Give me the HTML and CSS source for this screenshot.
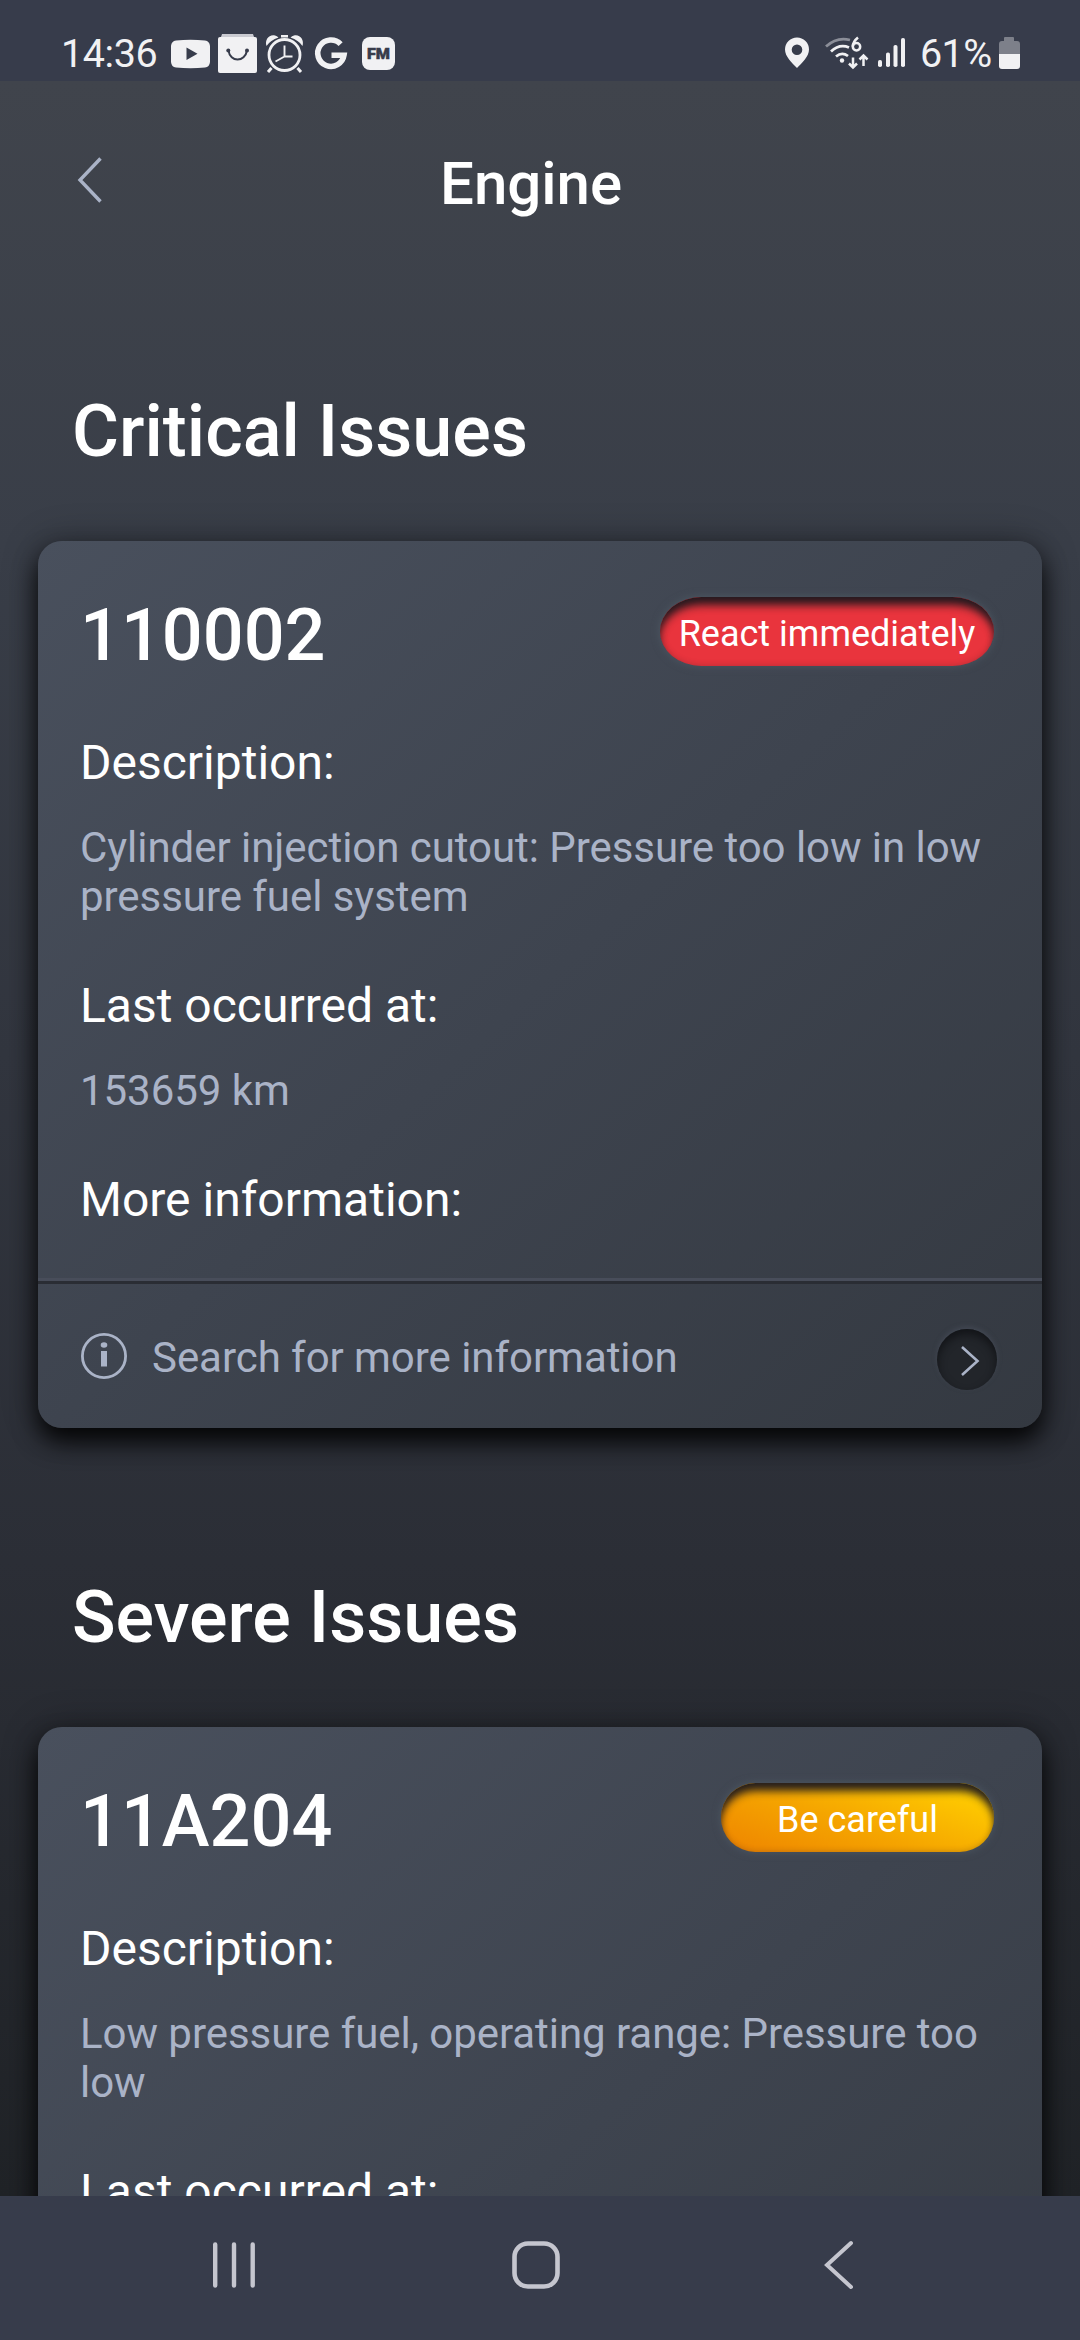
FILE: index.html
```html
<!DOCTYPE html>
<html lang="en">
<head>
<meta charset="utf-8">
<title>Engine</title>
<link rel="stylesheet" href="styles.css">
</head>
<body>
<div class="screen">
  <div class="status">
    <span class="clock">14:36</span>
    <svg class="notifications" width="226" height="42" viewBox="170 33 226 42" fill="#f1f1f3">
      <path fill-rule="evenodd" d="M176 40.500Q190.500 39 205 40.500Q209.500 41 210 46V62Q209.500 67 205 67.500Q190.500 69 176 67.500Q171.500 67 171 62V46Q171.500 41 176 40.500ZM186.500 47.500V60L197.500 53.700Z"/>
      <path d="M222 34h31l1 3h-33z" fill="#c9cad1"/>
      <rect x="218" y="37" width="39" height="36" rx="2"/>
      <path d="M228.500 50.500C230 62.500 245 62.500 247 50.500" fill="none" stroke="#373c4b" stroke-width="2"/>
      <circle cx="228.300" cy="50.500" r="2" fill="#373c4b"/><circle cx="247" cy="50.500" r="2" fill="#373c4b"/>
      <g fill="none" stroke="#f1f1f3">
        <circle cx="284.500" cy="55" r="15.500" stroke-width="2.800"/>
        <path d="M284.500 45.500V56.500L275.500 61.500M284.500 56.500H292.500" stroke-width="1.900"/>
        <path d="M271.500 68l-3.500 4M297.500 68l3.500 4" stroke-width="3"/>
      </g>
      <path d="M266.500 46C264.500 40 269 34 275 35.500Q277 36 278.500 37.500Q270.500 40 266.500 46ZM302.500 46C304.500 40 300 34 294 35.500Q292 36 290.500 37.500Q298.500 40 302.500 46ZM281 35h7v2.500h-7z"/>
      <path d="M340.600 44.200A13.200 13.200 0 1 0 344 55.200H331.500" fill="none" stroke="#f1f1f3" stroke-width="5.600"/>
      <rect x="362" y="37" width="33" height="33" rx="8"/>
      <text class="fm" x="378.500" y="58.800" text-anchor="middle" textLength="23" lengthAdjust="spacingAndGlyphs">FM</text>
    </svg>
    <svg class="signals" width="124" height="36" viewBox="784 35 124 36" fill="#f1f1f3">
      <path fill-rule="evenodd" d="M797 37.500A12 12 0 0 0 785 49.500C785 56.500 792 63 797 68C802 63 809 56.500 809 49.500A12 12 0 0 0 797 37.500ZM797 44.500a5.300 5.300 0 1 1 0 10.600a5.300 5.300 0 1 1 0-10.600Z"/>
      <g fill="none" stroke="#f1f1f3" stroke-width="2.800">
        <path d="M826 46.500Q837 36.500 850 40" stroke="#8b8e98"/>
        <path d="M831 51.500Q839.500 43.500 849 47.500M836 56.500Q842 51.500 848 56"/>
      </g>
      <circle cx="842" cy="60.500" r="2.200"/>
      <g fill="none" stroke="#f1f1f3" stroke-width="2.500">
        <path d="M858 37.500Q853 41.500 852.700 46.500"/><circle cx="856.500" cy="46.700" r="3.700"/>
        <path d="M853 57.500V68M849 63.500l4 4l4-4M863.500 66V55.500M859.500 59.500l4-4l4 4"/>
      </g>
      <rect x="878" y="60" width="4" height="7" rx="1.800"/><rect x="886" y="52.500" width="4" height="14.500" rx="1.800"/><rect x="893.500" y="45" width="4" height="22" rx="1.800"/><rect x="901" y="38" width="4" height="29" rx="1.800"/>
    </svg>
    <span class="percent">61%</span>
    <svg class="battery" width="22" height="34" viewBox="0 0 22 34">
      <path d="M7 1h8q1 0 1 1v3h3q3 0 3 3v10H1V8q0-3 3-3h2V2q0-1 1-1z" fill="#7d808a"/>
      <path d="M1 18h21v12q0 3-3 3H4q-3 0-3-3z" fill="#f1f1f3"/>
    </svg>
  </div>

  <main class="page">
    <header class="header">
      <svg class="back" width="28" height="50" viewBox="0 0 28 50"><path d="M24.500 3.500L4 25L24.500 46.500" fill="none" stroke="#aab3c7" stroke-width="3.400"/></svg>
      <h1 class="title">Engine</h1>
    </header>

    <section class="section">
      <h2 class="section-title">Critical Issues</h2>
      <article class="card">
        <div class="card-body">
          <div class="card-head"><span class="code">110002</span><span class="badge badge-red">React immediately</span></div>
          <h3 class="label">Description:</h3>
          <p class="value">Cylinder injection cutout: Pressure too low in low pressure fuel system</p>
          <h3 class="label">Last occurred at:</h3>
          <p class="value">153659 km</p>
          <h3 class="label">More information:</h3>
        </div>
        <div class="more">
          <svg class="info" width="46" height="46" viewBox="0 0 46 46"><circle cx="23" cy="23" r="21.600" fill="none" stroke="#aab3c7" stroke-width="2.800"/><ellipse cx="23" cy="12" rx="3.300" ry="2.700" fill="#aab3c7"/><path d="M20 18h6v15.500h-6z" fill="#aab3c7"/></svg>
          <span class="more-text">Search for more information</span>
          <span class="go"><svg width="22" height="32" viewBox="0 0 22 32"><path d="M2 2L17.500 16L2 30" fill="none" stroke="#aab3c7" stroke-width="2.600"/></svg></span>
        </div>
      </article>
    </section>

    <section class="section">
      <h2 class="section-title">Severe Issues</h2>
      <article class="card">
        <div class="card-body">
          <div class="card-head"><span class="code">11A204</span><span class="badge badge-yellow">Be careful</span></div>
          <h3 class="label">Description:</h3>
          <p class="value">Low pressure fuel, operating range: Pressure too low</p>
          <h3 class="label">Last occurred at:</h3>
        </div>
      </article>
    </section>
  </main>

  <nav class="nav">
    <svg class="recents" width="48" height="52" viewBox="0 0 48 52" stroke="#c5c6cf" stroke-width="4.400" stroke-linecap="round"><path d="M5.200 5.500V46.500M24 5.500V46.500M42.700 5.500V46.500"/></svg>
    <svg class="home" width="52" height="52" viewBox="0 0 52 52"><rect x="4.500" y="4.500" width="43" height="43" rx="13.500" fill="none" stroke="#c5c6cf" stroke-width="4.600"/></svg>
    <svg class="nav-back" width="36" height="52" viewBox="0 0 36 52"><path d="M30 4L6 26L30 48" fill="none" stroke="#c5c6cf" stroke-width="4" stroke-linecap="round"/></svg>
  </nav>
</div>
</body>
</html>
```
FILE: styles.css
```css
* { box-sizing: border-box; }
body { margin: 0; font-family: Roboto, "Liberation Sans", sans-serif; color: #fff; }
h1, h2, h3, p { margin: 0; font-weight: 400; }
svg { display: block; flex: none; }

.screen { width: 1080px; height: 2340px; display: flex; flex-direction: column; overflow: hidden; }

.status { flex: none; height: 81px; padding: 0 59px 0 61px; display: flex; align-items: flex-start; background: #373c4b; color: #f1f1f3; }
.clock, .percent { font-size: 39.5px; line-height: 46px; margin-top: 31px; white-space: nowrap; }
.clock { width: 109px; letter-spacing: -0.4px; }
.percent { margin-left: 12px; width: 78px; letter-spacing: -0.6px; }
.notifications { margin-top: 33px; }
.fm { font: 900 14.5px Roboto, sans-serif; fill: #373c4b; stroke: #373c4b; stroke-width: .5px; }
.signals { margin: 35px 0 0 388px; }
.battery { margin-top: 36px; }

.page { flex: 1; min-height: 0; overflow: hidden; background: linear-gradient(#40444c 0%, #393e48 22%, #2b2e36 70%, #202327 100%); }
.header { display: flex; align-items: flex-start; padding: 68px 0 0 76px; height: 138px; }
.back { margin-top: 6px; }
.title { margin-left: 336px; font-size: 60px; line-height: 70px; font-weight: 500; }

.section { padding: 0 38px; margin-top: 148px; }
.header + .section { margin-top: 171px; }
.section-title { padding-left: 34px; font-size: 72px; line-height: 84px; font-weight: 500; margin-bottom: 67px; white-space: nowrap; }

.card { height: 887px; border-radius: 24px; background: linear-gradient(138deg, #49505d 0%, #3e444f 50%, #343941 100%); box-shadow: 0 14px 24px rgba(0, 0, 0, .88), 0 0 36px rgba(0, 0, 0, .3); }
.card-body { height: 737px; padding: 52px 42px 0; }
.card-head { display: flex; justify-content: space-between; align-items: flex-start; height: 84px; }
.code { margin-top: 1px; font-size: 72px; line-height: 84px; font-weight: 500; }
.badge { margin: 4px 6px 0 0; height: 69px; padding-top: 3px; font-size: 36px; line-height: 68px; text-align: center; white-space: nowrap; box-shadow: 0 0 8px rgba(80, 92, 104, .8), inset 0 10px 9px -2px rgba(28, 24, 30, .95), inset 0 0 6px rgba(60, 30, 35, .3); }
.badge-red { width: 334px; border-radius: 42px / 35px; background: #e9343d; }
.badge-yellow { width: 273px; border-radius: 35px; background: linear-gradient(20deg, #ef8700 5%, #f5a500 45%, #ffcd00 90%); }

.label { margin-top: 57px; font-size: 48px; line-height: 56px; }
.card-head + .label { margin-top: 58px; }
.value { margin-top: 32px; margin-right: -10px; font-size: 42px; line-height: 49px; letter-spacing: -0.05px; color: #aab3c7; }

.more { height: 150px; border-top: 3px solid #484d5a; box-shadow: inset 0 3px 0 #2a2d34; padding: 3px 45px 0 43px; display: flex; align-items: center; }
.more-text { margin: 3px 0 0 25px; font-size: 42px; line-height: 49px; letter-spacing: -0.05px; color: #aab3c7; }
.go { margin: 6px 0 0 auto; width: 60px; height: 61px; border-radius: 50%; background: #22252a; display: flex; align-items: center; justify-content: center; padding: 3px 0 0 7px; box-shadow: 0 -2px 5px rgba(80, 86, 100, .5), inset 0 5px 8px rgba(12, 13, 16, .7); }

.nav { flex: none; height: 144px; padding: 43px 223px 0 210px; background: #373c4b; display: flex; align-items: flex-start; }
.home { margin-left: 252px; }
.nav-back { margin-left: 259px; }
```
